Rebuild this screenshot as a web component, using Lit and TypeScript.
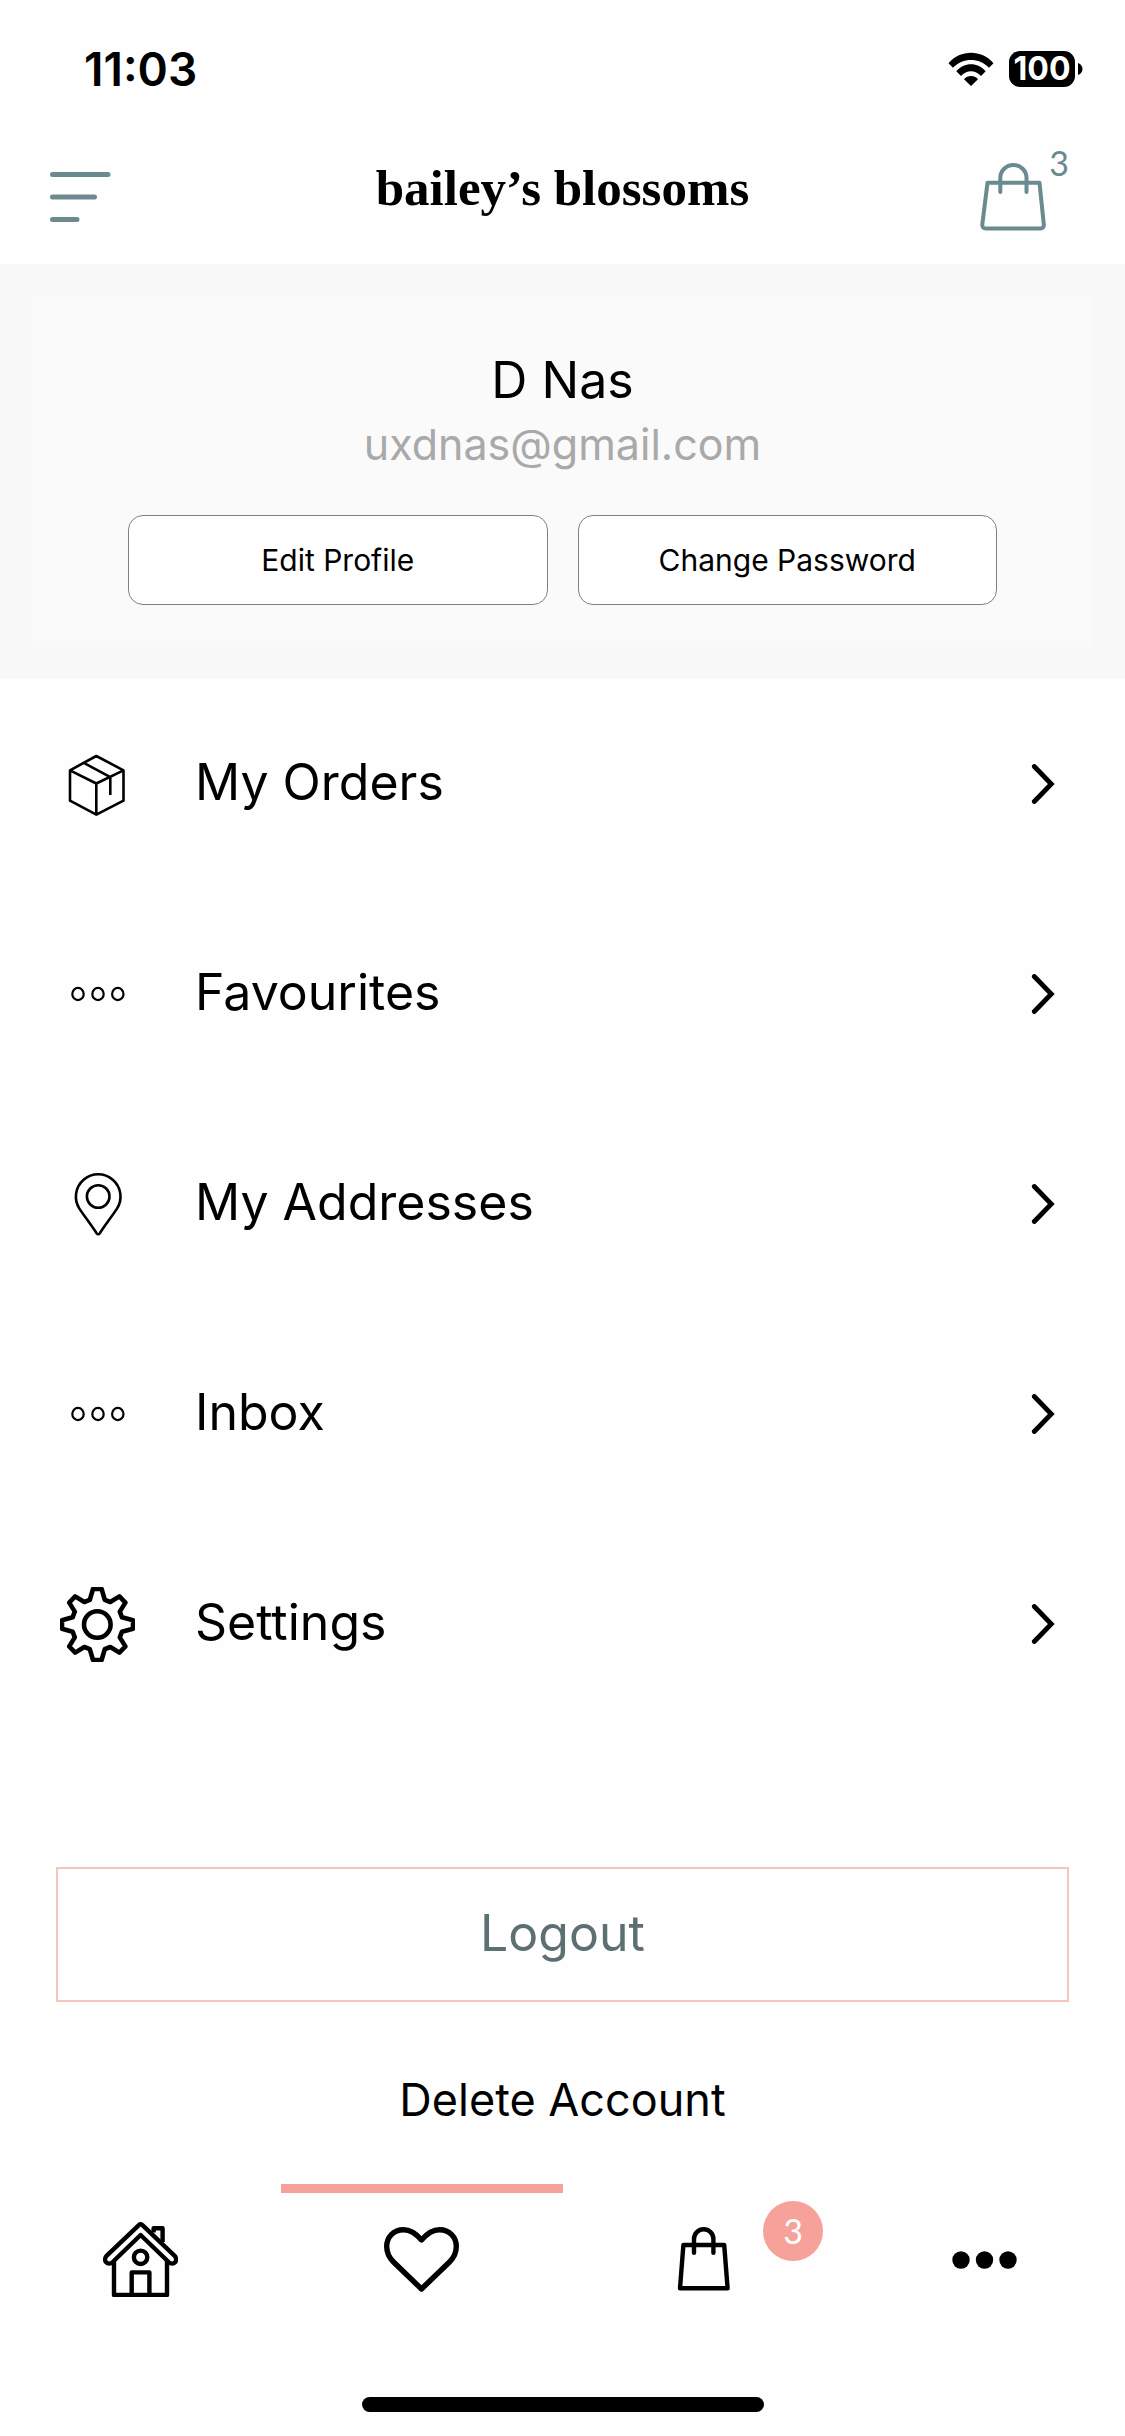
import { LitElement, html, css, svg } from "lit";
import { customElement, state } from "lit/decorators.js";
import { classMap } from "lit/directives/class-map.js";

const box = svg`<g fill="none" stroke="#000" stroke-width="2.6" stroke-linejoin="round">
  <path d="M36.3 9 63.5 23.3V53.7L36.3 67.7 10 53.7V23.3ZM10 23.3 36.3 36.5 63.5 23.3M36.3 36.5V67.7M24.3 16.2 50.3 30.2V48"/></g>`;
const rings = svg`<g fill="none" stroke="#000" stroke-width="2.2">
  <ellipse cx="18" cy="37" rx="5.7" ry="6.1"/><ellipse cx="38" cy="37" rx="5.7" ry="6.1"/><ellipse cx="57.8" cy="37" rx="5.7" ry="6.1"/></g>`;
const pin = svg`<g fill="none" stroke="#000" stroke-width="2.6" stroke-linejoin="round">
  <path d="M36.6 66.2C32 59 25 50 19.4 41.6A22.3 22.3 0 1 1 57 41.6C51.4 50 44.4 59 39.8 66.2Q38.2 68.3 36.6 66.2Z"/>
  <circle cx="38.2" cy="29.5" r="11.3"/></g>`;
const gear = svg`<g fill="none" stroke="#000" stroke-width="4.6" stroke-linejoin="round">
  <path d="M33 2H41.6L44.8 12.8 50.3 15 59.4 9.4 65.4 15.6 59.8 24.6 62 30.3 73 33.2V41.8L62 44.7 59.8 50.4 65.4 59.4 59.4 65.6 50.3 60 44.8 62.2 41.6 73H33L29.8 62.2 24.3 60 15.2 65.6 9.2 59.4 14.8 50.4 12.6 44.7 2 41.8V33.2L12.6 30.3 14.8 24.6 9.2 15.6 15.2 9.4 24.3 15 29.8 12.8Z"/>
  <circle cx="37.3" cy="37.5" r="13.3"/></g>`;
const house = svg`<g fill="none" stroke="#000" stroke-width="4.4" stroke-linejoin="round">
  <path d="M35.6 3.3Q37.6 1.3 39.7 3.3L71.4 33.6C76 38.5 70.5 44.5 65.6 40L37.6 13 9.7 40C4.8 44.5-.8 38.5 3.8 33.6Z"/>
  <path d="M11 39V73H64V39M28.7 73V50.4H46.4V73M50.6 10.5V6.3H59.6V20"/>
  <circle cx="37.6" cy="35.3" r="6.7"/></g>`;
const heart = svg`<path fill="none" stroke="#000" stroke-width="5.4" stroke-linejoin="round"
  d="M37.5 18C32 11.5 26 7.7 19.5 7.7C9.5 7.7 2.7 15 2.7 24.5C2.7 30.5 4.5 35 9.5 40L37.5 67 65.5 40C70.5 35 72.3 30.5 72.3 24.5C72.3 15 65.5 7.7 55.5 7.7C49 7.7 43 11.5 37.5 18Z"/>`;
const bag = svg`<g fill="none" stroke="#000" stroke-width="4.4" stroke-linejoin="round" stroke-linecap="round">
  <path d="M17.4 23H58.2L61.6 66.3H14ZM28 30.7V17A9.7 9.7 0 0 1 47.4 17V30.7"/></g>`;
const dots = svg`<circle cx="14" cy="38" r="8.7"/><circle cx="37.5" cy="38" r="8.7"/><circle cx="61" cy="38" r="8.7"/>`;

const menu = [
  { label: "My Orders", icon: box },
  { label: "Favourites", icon: rings },
  { label: "My Addresses", icon: pin },
  { label: "Inbox", icon: rings },
  { label: "Settings", icon: gear },
];

const tabs = [
  { label: "Home", icon: house, count: 0 },
  { label: "Wishlist", icon: heart, count: 0 },
  { label: "Bag", icon: bag, count: 3 },
  { label: "More", icon: dots, count: 0 },
];

@customElement("app-root")
export class AppRoot extends LitElement {
  @state() private active = 1;

  static styles = css`
    :host {
      display: flex;
      flex-direction: column;
      min-height: 100vh;
      background: #fefefe;
      color: #000;
      font-family: Inter, "Liberation Sans", sans-serif;
    }
    * {
      box-sizing: border-box;
    }
    button {
      font: inherit;
      color: inherit;
      background: none;
      border: 0;
      padding: 0;
      margin: 0;
      cursor: pointer;
    }
    a {
      color: inherit;
      text-decoration: none;
    }
    svg {
      display: block;
      flex: none;
    }
    h1,
    h2,
    p,
    ul {
      margin: 0;
      padding: 0;
      font-weight: 400;
    }
    .status {
      display: flex;
      align-items: center;
      justify-content: space-between;
      height: 138px;
      padding: 0 42px 0 84px;
      font-size: 46px;
      font-weight: 600;
    }
    .signals {
      display: flex;
      align-items: center;
      gap: 15px;
    }
    .battery {
      display: flex;
      align-items: center;
      gap: 3px;
    }
    .level {
      display: flex;
      align-items: center;
      justify-content: center;
      width: 66px;
      height: 36px;
      border-radius: 11px;
      background: #000;
      color: #fff;
      font-size: 32px;
      font-weight: 700;
      line-height: 36px;
    }
    .header {
      display: grid;
      grid-template-columns: 1fr auto 1fr;
      align-items: center;
      height: 126px;
      padding: 0 48px 8px;
    }
    .brand {
      font-family: "Liberation Serif", serif;
      font-size: 51px;
      line-height: 60px;
      font-weight: 700;
      padding-bottom: 18px;
    }
    .cart {
      position: relative;
      justify-self: end;
      padding-right: 30px;
      color: #6b8a90;
    }
    .cart-count {
      position: absolute;
      top: -17px;
      right: 8px;
      font-family: Lato, sans-serif;
      font-size: 34px;
      line-height: 36px;
    }
    .profile {
      padding: 32px;
      background: #f8f8f8;
    }
    .card {
      display: flex;
      flex-direction: column;
      align-items: center;
      padding: 52px 96px 42px;
      background: #fafafa;
    }
    .name {
      font-size: 50px;
      line-height: 64px;
    }
    .email {
      font-size: 43px;
      line-height: 64px;
      color: #a9a9a9;
    }
    .actions {
      display: grid;
      grid-template-columns: 1fr 1fr;
      gap: 30px;
      width: 100%;
      margin-top: 39px;
    }
    .action {
      height: 90px;
      border: 1px solid #808080;
      border-radius: 15px;
      background: #fff;
      font-size: 30px;
    }
    .menu {
      list-style: none;
    }
    .row {
      display: flex;
      align-items: center;
      gap: 60px;
      height: 210px;
      padding: 0 60px;
      font-size: 50px;
    }
    .row-label {
      flex: 1;
      padding-bottom: 4px;
    }
    .account {
      display: flex;
      flex-direction: column;
      gap: 66px;
      padding: 138px 56px 0;
    }
    .logout {
      height: 135px;
      padding-bottom: 4px;
      border: 2px solid #f3c5bd;
      color: #5c7072;
      font-size: 50px;
    }
    .delete {
      align-self: center;
      font-size: 45px;
      line-height: 64px;
    }
    .tabs {
      display: grid;
      grid-template-columns: repeat(4, 1fr);
      margin-top: auto;
    }
    .tab {
      position: relative;
      display: flex;
      justify-content: center;
      padding: 29px 0 100px;
      border-top: 9px solid transparent;
    }
    .tab.active {
      border-top-color: #f6a29b;
    }
    .badge {
      position: absolute;
      top: 8px;
      left: calc(50% + 60px);
      width: 60px;
      border-radius: 50%;
      background: #f6a29b;
      color: #fff;
      font-family: Lato, sans-serif;
      font-size: 34px;
      line-height: 60px;
      text-align: center;
    }
    .home-bar {
      align-self: center;
      width: 402px;
      height: 15px;
      margin-bottom: 24px;
      border-radius: 8px;
      background: #000;
    }
  `;

  render() {
    return html`
      <div class="status">
        <span>11:03</span>
        <div class="signals">
          <svg width="46" height="34" viewBox="0 0 46 34">
            <path d="M0.5 11.2C12.5-2.7 33.5-2.7 45.5 11.2L41 15.8C31.5 5.4 14.5 5.4 5 15.8Z" />
            <path d="M8.3 19.2C16 9.8 30 9.8 37.7 19.2L33 23.9C27.5 17.6 18.5 17.6 13 23.9Z" />
            <path d="M16 27.2C19.5 23 26.5 23 30 27.2L23 34Z" />
          </svg>
          <div class="battery">
            <span class="level">100</span>
            <svg width="5" height="12" viewBox="0 0 5 12"><path d="M0 0C6 2 6 10 0 12Z" /></svg>
          </div>
        </div>
      </div>

      <header class="header">
        <button aria-label="Menu">
          <svg width="66" height="52" viewBox="0 0 66 52" stroke="#6b8a90" stroke-width="5" stroke-linecap="round">
            <path d="M4.5 3.5H60M4.5 26H46.5M4.5 48.5H29" />
          </svg>
        </button>
        <h1 class="brand">bailey’s blossoms</h1>
        <button class="cart" aria-label="Bag, 3 items">
          <svg width="68" height="70" viewBox="0 0 68 70" fill="none" stroke="currentColor" stroke-width="4" stroke-linejoin="round" stroke-linecap="round">
            <path d="M8.5 20.7H60.5L64.8 62.5Q65.2 66.5 61.2 66.5H7Q3 66.5 3.3 62.5ZM21.3 30V16A13.1 13.1 0 0 1 47.5 16V30" />
          </svg>
          <span class="cart-count">3</span>
        </button>
      </header>

      <section class="profile">
        <div class="card">
          <h2 class="name">D Nas</h2>
          <p class="email">uxdnas@gmail.com</p>
          <div class="actions">
            <button class="action">Edit Profile</button>
            <button class="action">Change Password</button>
          </div>
        </div>
      </section>

      <ul class="menu">
        ${menu.map(
          (item) => html`<li>
            <a class="row" href="#">
              <svg width="75" height="75" viewBox="0 0 75 75">${item.icon}</svg>
              <span class="row-label">${item.label}</span>
              <svg width="36" height="40" viewBox="0 0 36 40" fill="none" stroke="#000" stroke-width="4.8" stroke-linecap="round">
                <path d="M5.3 2.5 22.3 20 5.3 37.5" />
              </svg>
            </a>
          </li>`
        )}
      </ul>

      <section class="account">
        <button class="logout">Logout</button>
        <button class="delete">Delete Account</button>
      </section>

      <nav class="tabs">
        ${tabs.map(
          (tab, i) => html`<button
            class=${classMap({ tab: true, active: i === this.active })}
            aria-label=${tab.label}
            @click=${() => (this.active = i)}
          >
            <svg width="75" height="75" viewBox="0 0 75 75">${tab.icon}</svg>
            ${tab.count ? html`<span class="badge">${tab.count}</span>` : null}
          </button>`
        )}
      </nav>
      <div class="home-bar"></div>
    `;
  }
}
